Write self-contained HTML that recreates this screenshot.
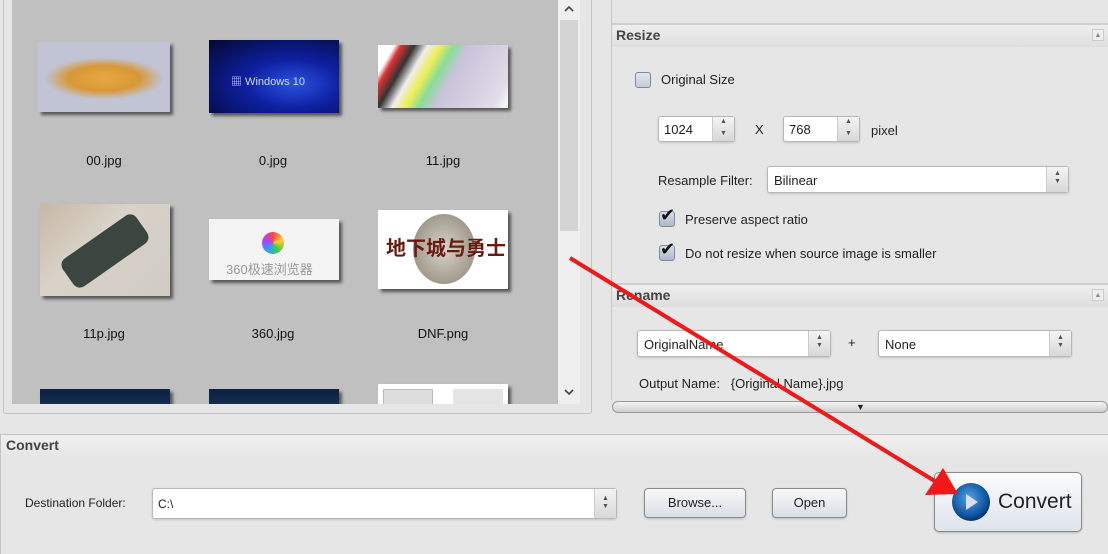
<!DOCTYPE html>
<html><head><meta charset="utf-8"><style>
*{box-sizing:border-box;margin:0;padding:0}
body{width:1108px;height:551px;overflow:hidden;background:#e6e6e6;font-family:"Liberation Sans","Noto Sans CJK SC",sans-serif;font-size:13px;color:#222;position:relative}
.a{position:absolute}
.thumb{position:absolute;box-shadow:3px 3px 3px rgba(0,0,0,.55)}
.lbl{position:absolute;width:140px;text-align:center;font-size:13px;color:#111}
.field{position:absolute;background:#fff;border:1px solid #b8b8b8;border-radius:3px;box-shadow:0 1px 2px rgba(0,0,0,.15)}
.spin{position:absolute;right:0;top:0;bottom:0;width:22px;background:linear-gradient(#f4f4f4,#d8d8d8);border-left:1px solid #ccc}
.btn{position:absolute;border:1px solid #8a8a8a;border-radius:4px;background:linear-gradient(#fafafa,#d9dee6);text-align:center;box-shadow:0 1px 2px rgba(0,0,0,.2)}
.hdr{position:absolute;left:612px;right:0;height:24px;background:linear-gradient(#efefef,#dedede);border-top:2px solid #cfcfcf;font-weight:bold;font-size:14px;color:#444;padding:2px 0 0 4px}
.cb{position:absolute;width:16px;height:16px;border:1px solid #7d8aa0;border-radius:3px;background:linear-gradient(#d6dde8,#aeb9ca)}
</style></head><body>
<!-- left panel -->
<div class="a" style="left:3px;top:-2px;width:589px;height:416px;border:1px solid #c4c4c4;border-radius:3px"></div>
<div class="a" style="left:12px;top:0;width:546px;height:404px;background:#c0c0c0;overflow:hidden">
 <div class="thumb" style="left:26px;top:42px;width:132px;height:70px;background:radial-gradient(ellipse 45% 30% at 50% 52%,#e8a840 0,#d89838 60%,#c0c4d4 100%),#bcc0ce"></div>
 <div class="thumb" style="left:197px;top:40px;width:130px;height:73px;background:radial-gradient(ellipse at 65% 60%,#2a52e0 0,#0e1fa0 40%,#030830 100%)"><span style="position:absolute;left:22px;top:33px;color:#cfd8ff;font-size:11px">▦ Windows 10</span></div>
 <div class="thumb" style="left:366px;top:45px;width:130px;height:63px;background:linear-gradient(120deg,#fff 0,#fff 10%,#d33 14%,#333 22%,#eee 30%,#ee5 38%,#8d9 46%,#c9c3da 55%,#e0dce8 90%,#fff 100%)"></div>
 <div class="lbl" style="left:22px;top:153px">00.jpg</div>
 <div class="lbl" style="left:191px;top:153px">0.jpg</div>
 <div class="lbl" style="left:361px;top:153px">11.jpg</div>
 <div class="thumb" style="left:28px;top:204px;width:130px;height:92px;background:linear-gradient(135deg,#c8b8a4 0,#d8d2c8 40%,#d0cbc4 100%)"><div style="position:absolute;left:20px;top:30px;width:90px;height:34px;background:#3c4640;border-radius:8px;transform:rotate(-35deg)"></div></div>
 <div class="thumb" style="left:197px;top:219px;width:130px;height:61px;background:#f4f4f4"><div style="position:absolute;left:53px;top:13px;width:22px;height:22px;border-radius:50%;background:conic-gradient(#f44,#fc3,#4c4,#39f,#a4f,#f44)"></div><span style="position:absolute;left:17px;top:40px;color:#999;font-size:13px">360极速浏览器</span></div>
 <div class="thumb" style="left:366px;top:210px;width:130px;height:79px;background:#fff"><div style="position:absolute;left:35px;top:4px;width:62px;height:70px;border-radius:50%;background:radial-gradient(#d8d4cc,#8a8070)"></div><span style="position:absolute;left:8px;top:22px;color:#6a1a10;font-size:20px;font-weight:bold">地下城与勇士</span></div>
 <div class="lbl" style="left:22px;top:326px">11p.jpg</div>
 <div class="lbl" style="left:191px;top:326px">360.jpg</div>
 <div class="lbl" style="left:361px;top:326px">DNF.png</div>
 <div class="thumb" style="left:28px;top:389px;width:130px;height:30px;background:linear-gradient(#0e2040,#1a3a60)"></div>
 <div class="thumb" style="left:197px;top:389px;width:130px;height:30px;background:linear-gradient(#0e2040,#1a3a60)"></div>
 <div class="thumb" style="left:366px;top:384px;width:130px;height:30px;background:#fff"><div style="position:absolute;left:5px;top:5px;width:50px;height:30px;background:#ddd;border:1px solid #bbb"></div><div style="position:absolute;left:75px;top:5px;width:50px;height:30px;background:#e4e4e4"></div></div>
</div>
<div class="a" style="left:558px;top:0;width:22px;height:404px;background:#efefef"></div>
<div class="a" style="left:560px;top:20px;width:18px;height:211px;background:#d4d4d4"></div>
<svg class="a" style="left:558px;top:0" width="22" height="404"><path d="M7 11 L11 7 L15 11" fill="none" stroke="#444" stroke-width="1.6"/><path d="M7 390 L11 394 L15 390" fill="none" stroke="#444" stroke-width="1.6"/></svg>

<!-- right panel -->
<div class="a" style="left:611px;top:0;width:1px;height:400px;background:#c8c8c8"></div>
<div class="hdr" style="top:23px">Resize</div>
<div class="a" style="left:1092px;top:29px;width:12px;height:12px;border:1px solid #ccc;background:#eee;font-size:7px;color:#888;text-align:center;line-height:11px">▲</div>
<div class="cb" style="left:635px;top:72px;background:linear-gradient(#e0e6ee,#c4ccd8)"></div>
<div class="a" style="left:661px;top:72px">Original Size</div>
<div class="field" style="left:658px;top:116px;width:77px;height:26px"><span style="position:absolute;left:5px;top:5px">1024</span><div class="spin"><span style="position:absolute;left:7px;top:1px;font-size:7px;color:#555">▲</span><span style="position:absolute;left:7px;top:13px;font-size:7px;color:#555">▼</span></div></div>
<div class="a" style="left:755px;top:122px">X</div>
<div class="field" style="left:783px;top:116px;width:77px;height:26px"><span style="position:absolute;left:5px;top:5px">768</span><div class="spin"><span style="position:absolute;left:7px;top:1px;font-size:7px;color:#555">▲</span><span style="position:absolute;left:7px;top:13px;font-size:7px;color:#555">▼</span></div></div>
<div class="a" style="left:871px;top:123px">pixel</div>
<div class="a" style="left:658px;top:173px">Resample Filter:</div>
<div class="field" style="left:767px;top:166px;width:302px;height:27px"><span style="position:absolute;left:6px;top:6px">Bilinear</span><div class="spin"><span style="position:absolute;left:7px;top:3px;font-size:7px;color:#555;line-height:8px">▲<br>▼</span></div></div>
<div class="cb" style="left:659px;top:211px"></div><div class="a" style="left:660px;top:205px;font-size:18px;color:#111">✔</div>
<div class="a" style="left:685px;top:212px">Preserve aspect ratio</div>
<div class="cb" style="left:659px;top:245px"></div><div class="a" style="left:660px;top:239px;font-size:18px;color:#111">✔</div>
<div class="a" style="left:685px;top:246px">Do not resize when source image is smaller</div>
<div class="hdr" style="top:283px">Rename</div>
<div class="a" style="left:1092px;top:289px;width:12px;height:12px;border:1px solid #ccc;background:#eee;font-size:7px;color:#888;text-align:center;line-height:11px">▲</div>
<div class="field" style="left:637px;top:330px;width:194px;height:27px"><span style="position:absolute;left:6px;top:6px">OriginalName</span><div class="spin"><span style="position:absolute;left:7px;top:3px;font-size:7px;color:#555;line-height:8px">▲<br>▼</span></div></div>
<div class="a" style="left:848px;top:335px">+</div>
<div class="field" style="left:878px;top:330px;width:194px;height:27px"><span style="position:absolute;left:6px;top:6px">None</span><div class="spin"><span style="position:absolute;left:7px;top:3px;font-size:7px;color:#555;line-height:8px">▲<br>▼</span></div></div>
<div class="a" style="left:639px;top:376px">Output Name:&nbsp;&nbsp;&nbsp;{Original Name}.jpg</div>
<div class="a" style="left:612px;top:401px;width:496px;height:12px;border:1px solid #999;border-radius:6px;background:linear-gradient(#f4f4f4,#cfcfcf)"><span style="position:absolute;left:243px;top:0;font-size:9px;line-height:10px">▼</span></div>

<!-- convert section -->
<div class="a" style="left:0;top:434px;width:1108px;height:120px;border-top:1px solid #c4c4c4;border-left:1px solid #c4c4c4;background:#e6e6e6"></div>
<div class="a" style="left:1px;top:435px;width:1107px;height:22px;background:linear-gradient(#f0f0f0,#e6e6e6)"></div>
<div class="a" style="left:6px;top:437px;font-size:14px;font-weight:bold;color:#444">Convert</div>
<div class="a" style="left:25px;top:496px;font-size:12px">Destination Folder:</div>
<div class="field" style="left:152px;top:488px;width:465px;height:31px"><span style="position:absolute;left:5px;top:8px;font-size:12px">C:\</span><div class="spin"><span style="position:absolute;left:7px;top:6px;font-size:7px;color:#555;line-height:8px">▲<br>▼</span></div></div>
<div class="btn" style="left:644px;top:488px;width:102px;height:30px;line-height:28px">Browse...</div>
<div class="btn" style="left:772px;top:488px;width:75px;height:30px;line-height:28px">Open</div>
<div class="btn" style="left:934px;top:472px;width:148px;height:60px;border-radius:5px;background:linear-gradient(#fbfbfb,#dfe4ec)">
 <div style="position:absolute;left:17px;top:10px;width:38px;height:38px;border-radius:50%;background:radial-gradient(circle at 45% 40%,#4fa3ea,#0d4f9a 60%,#0a2240 80%,#999 100%)"><div style="position:absolute;left:14px;top:11px;width:0;height:0;border-left:12px solid #dde;border-top:8px solid transparent;border-bottom:8px solid transparent"></div></div>
 <span style="position:absolute;left:63px;top:17px;font-size:21px;color:#222">Convert</span>
</div>

<!-- red arrow -->
<svg class="a" style="left:0;top:0" width="1108" height="551">
 <line x1="570" y1="258" x2="938" y2="483" stroke="#f01818" stroke-width="4"/>
 <polygon points="958,494 925,495 943,468" fill="#f01818"/>
</svg>
</body></html>
